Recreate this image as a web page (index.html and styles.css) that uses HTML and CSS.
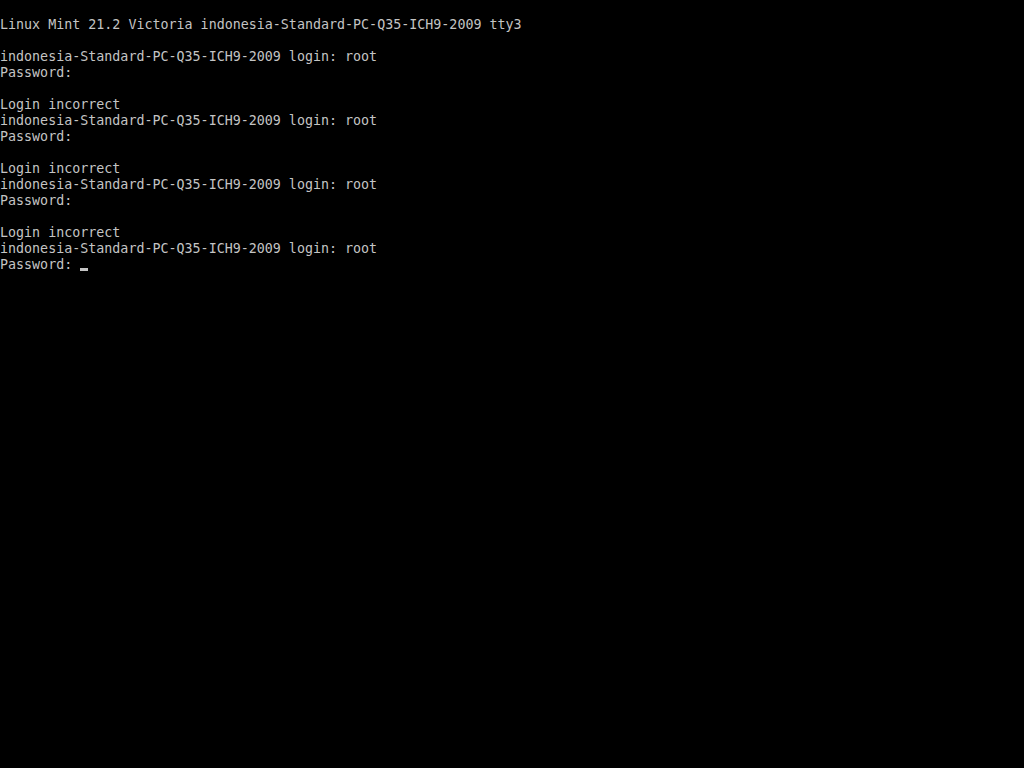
FILE: index.html
```html
<!DOCTYPE html>
<html lang="en">
<head>
    <meta charset="UTF-8">
    <title>tty3</title>
    <link rel="stylesheet" href="styles.css">
</head>
<body>
<pre class="console">

Linux Mint 21.2 Victoria indonesia-Standard-PC-Q35-ICH9-2009 tty3

indonesia-Standard-PC-Q35-ICH9-2009 login: root
Password:

Login incorrect
indonesia-Standard-PC-Q35-ICH9-2009 login: root
Password:

Login incorrect
indonesia-Standard-PC-Q35-ICH9-2009 login: root
Password:

Login incorrect
indonesia-Standard-PC-Q35-ICH9-2009 login: root
Password: <span class="cursor"></span></pre>
</body>
</html>
```

FILE: styles.css
```css
* {
    box-sizing: border-box;
}

html, body {
    margin: 0;
    height: 100%;
    background: #000;
}

.console {
    margin: 0;
    padding: 1px 0 0;
    color: #c4c4c4;
    font-family: "DejaVu Sans Mono", "Liberation Mono", monospace;
    font-size: 13.33px;
    line-height: 16px;
}

.cursor {
    display: inline-block;
    width: 8px;
    height: 3px;
    background: #c4c4c4;
    vertical-align: -2px;
}
```
